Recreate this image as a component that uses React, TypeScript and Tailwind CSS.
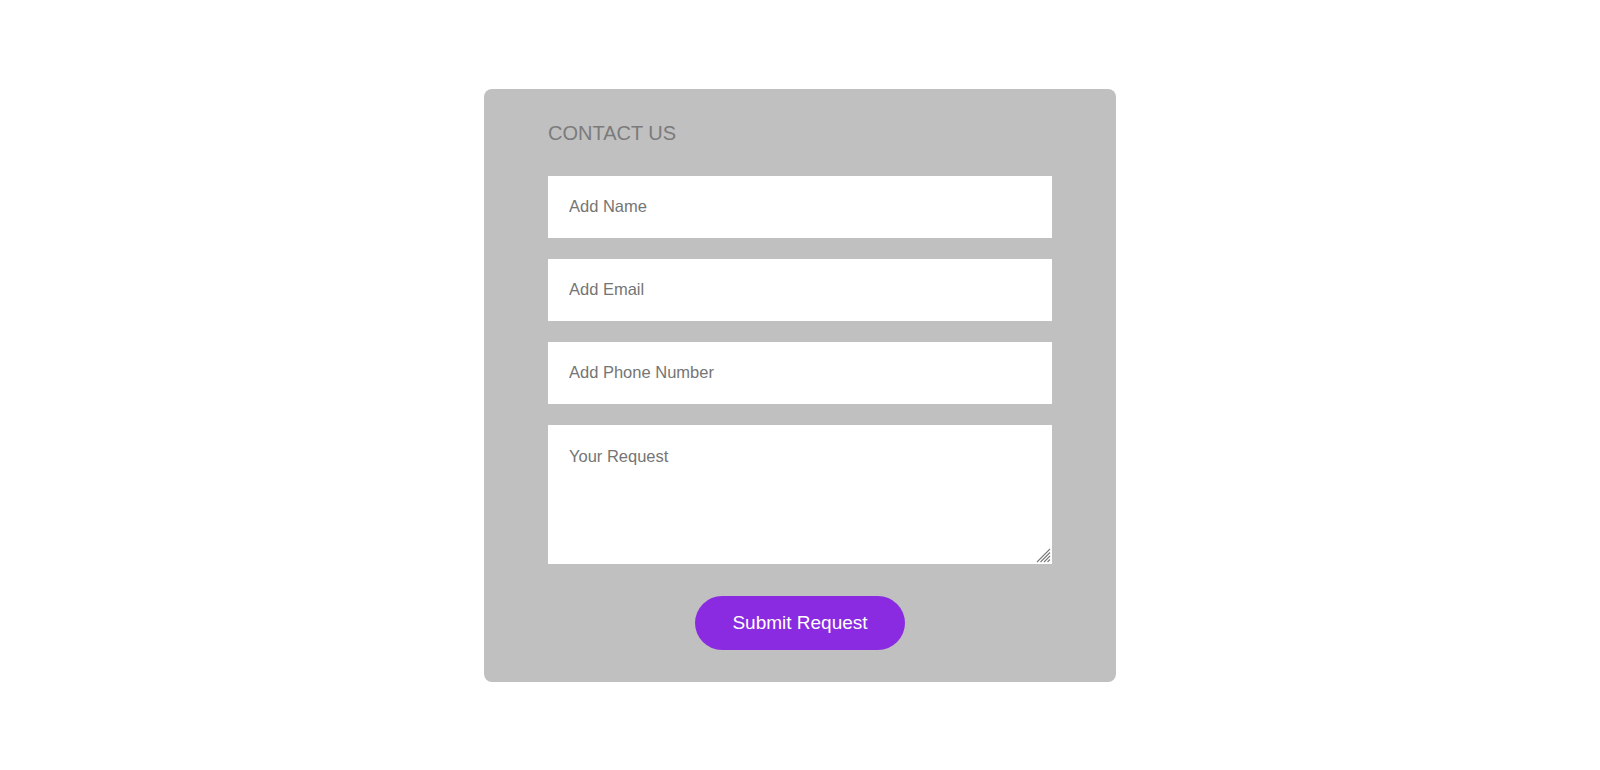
const fieldCls =
  'h-[62px] w-full border border-white bg-white px-5 pb-[2px] text-[16.5px] text-[#333] outline-none placeholder:text-[#757575]'

export default function App() {
  return (
    <div className="min-h-screen bg-white pt-[89px] font-['Liberation_Sans',Arial,sans-serif]">
      <form
        onSubmit={e => e.preventDefault()}
        className="mx-auto flex w-[632px] flex-col rounded-lg bg-[#c0c0c0] px-16 pt-[33px] pb-8"
      >
        <h2 className="text-[20px] leading-[23px] text-[#7b7b7b]">CONTACT US</h2>
        <div className="mt-[31px] flex flex-col gap-[21px]">
          <input placeholder="Add Name" className={fieldCls} />
          <input placeholder="Add Email" className={fieldCls} />
          <input placeholder="Add Phone Number" className={fieldCls} />
          <div className="relative">
            <textarea
              placeholder="Your Request"
              className="block h-[139px] w-full resize-none border border-white bg-white px-5 pt-[18px] pb-5 text-[16.5px] text-[#333] outline-none placeholder:text-[#757575]"
            />
            {/* resize grip */}
            <svg
              className="pointer-events-none absolute right-[1px] bottom-[1px]"
              width="15"
              height="15"
              viewBox="0 0 15 15"
              stroke="#7a7a7a"
              strokeWidth="1.1"
            >
              <line x1="1" y1="14" x2="14" y2="1" />
              <line x1="4.5" y1="14" x2="14" y2="4.5" />
              <line x1="8" y1="14" x2="14" y2="8" />
              <line x1="11.5" y1="14" x2="14" y2="11.5" />
            </svg>
          </div>
        </div>
        <button
          type="submit"
          className="mx-auto mt-8 h-[54px] w-[210px] rounded-full bg-[#8a2be2] text-[19px] text-white"
        >
          Submit Request
        </button>
      </form>
    </div>
  )
}
